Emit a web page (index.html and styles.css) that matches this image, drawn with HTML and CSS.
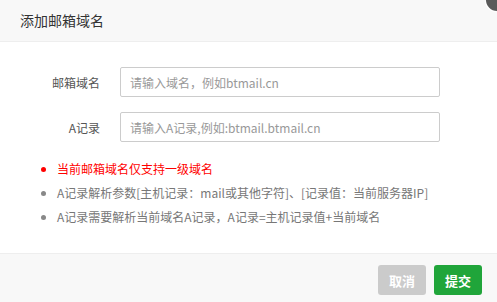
FILE: index.html
```html
<!DOCTYPE html>
<html lang="zh-CN">
<head>
<meta charset="utf-8">
<title>添加邮箱域名</title>
<link rel="stylesheet" href="styles.css">
</head>
<body>
<div class="dialog">
  <header class="dialog-head">
    <span class="dialog-title">添加邮箱域名</span>
    <span class="dialog-close"></span>
  </header>
  <div class="dialog-body">
    <div class="form-row">
      <label class="form-label">邮箱域名</label>
      <input class="form-input" type="text" placeholder="请输入域名，例如btmail.cn">
    </div>
    <div class="form-row">
      <label class="form-label">A记录</label>
      <input class="form-input" type="text" placeholder="请输入A记录,例如:btmail.btmail.cn">
    </div>
    <ul class="notes">
      <li class="note-red">当前邮箱域名仅支持一级域名</li>
      <li>A记录解析参数[主机记录：mail或其他字符]、[记录值：当前服务器IP]</li>
      <li>A记录需要解析当前域名A记录，A记录=主机记录值+当前域名</li>
    </ul>
  </div>
  <div class="dialog-footer">
    <button class="btn btn-cancel" type="button">取消</button>
    <button class="btn btn-submit" type="button">提交</button>
  </div>
</div>
</body>
</html>
```
FILE: styles.css
```css
* { box-sizing: border-box; }
html, body {
  margin: 0;
  padding: 0;
  width: 100%;
  height: 100%;
  overflow: hidden;
}
body {
  background: #fff;
  font-family: "Noto Sans CJK SC", "Noto Sans", sans-serif;
}
.dialog {
  display: flex;
  flex-direction: column;
  width: 100%;
  height: 100%;
  background: #fff;
}
.dialog-head {
  display: flex;
  justify-content: space-between;
  align-items: flex-start;
  flex: none;
  height: 42px;
  padding-left: 20px;
  background: #f8f8f8;
  border-bottom: 1px solid #eee;
}
.dialog-title {
  line-height: 41px;
  font-size: 14px;
  color: #333;
}
.dialog-close {
  flex: none;
  width: 11px;
  height: 11px;
  border-bottom-left-radius: 11px;
  background: #5a5a5a;
  box-shadow: -1px 1px 0 #fff;
}
.dialog-body {
  flex: 1;
  padding-top: 25px;
}
.form-row {
  display: flex;
  align-items: center;
  height: 30px;
  margin-bottom: 15px;
}
.form-label {
  width: 100px;
  text-align: right;
  font-size: 12px;
  color: #555;
  margin-right: 20px;
}
.form-input {
  width: 320px;
  height: 30px;
  padding: 0 9px;
  border: 1px solid #ccc;
  border-radius: 2px;
  font-family: inherit;
  font-size: 12px;
  color: #555;
  outline: none;
}
.form-input::placeholder { color: #999; }
.notes {
  margin: 0;
  padding: 0 0 0 57px;
  list-style: disc;
  font-size: 12px;
  line-height: 24px;
  color: #777;
}
.notes li::marker { color: #888; }
.notes .note-red { color: #f00; }
.notes .note-red::marker { color: #f00; }
.dialog-footer {
  display: flex;
  justify-content: flex-end;
  flex: none;
  gap: 8px;
  height: 49px;
  padding: 11px 15px 0 0;
  background: #f8f8f8;
  border-top: 1px solid #eee;
}
.btn {
  width: 48px;
  height: 30px;
  border: none;
  border-radius: 3px;
  font-family: inherit;
  font-size: 13px;
  font-weight: bold;
  color: #fff;
  padding: 0;
}
.btn-cancel { background: #cbcbcb; }
.btn-submit { background: #20a53a; }
```
